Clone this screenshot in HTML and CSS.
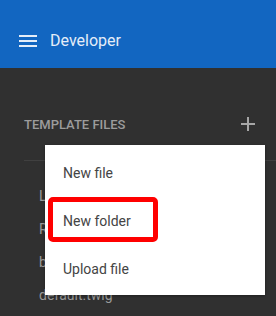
FILE: index.html
```html
<!DOCTYPE html>
<html lang="en">
<head>
<meta charset="utf-8">
<title>Developer</title>
<link rel="stylesheet" href="styles.css">
</head>
<body>
<header class="appbar">
  <svg class="menu-icon" width="24" height="24" viewBox="0 0 24 24" aria-hidden="true">
    <rect x="3" y="6" width="18" height="2" fill="currentColor"/>
    <rect x="3" y="11" width="18" height="2" fill="currentColor"/>
    <rect x="3" y="16" width="18" height="2" fill="currentColor"/>
  </svg>
  <span class="title">Developer</span>
</header>
<main class="content">
  <div class="section-head">
    <span class="section-title">TEMPLATE FILES</span>
    <svg class="add-icon" width="24" height="24" viewBox="0 0 24 24" aria-hidden="true">
      <path d="M12 5v14M5 12h14" stroke="currentColor" stroke-width="2" fill="none"/>
    </svg>
  </div>
  <div class="divider"></div>
  <ul class="files">
    <li>Layout.twig</li>
    <li>README.md</li>
    <li>base.twig</li>
    <li>default.twig</li>
  </ul>
  <div class="popup">
    <div class="popup-item">New file</div>
    <div class="popup-item">New folder</div>
    <div class="popup-item">Upload file</div>
    <div class="highlight"></div>
  </div>
</main>
</body>
</html>
```
FILE: styles.css
```css
html, body {
  margin: 0;
  padding: 0;
}
body {
  width: 276px;
  height: 316px;
  overflow: hidden;
  background: #303030;
  font-family: Roboto, "Liberation Sans", sans-serif;
}
.appbar {
  box-sizing: border-box;
  height: 68px;
  padding: 14px 0 0 16px;
  display: flex;
  align-items: center;
  gap: 10px;
  background: #1266c1;
  color: #e4edf8;
}
.menu-icon {
  display: block;
  flex: none;
}
.title {
  font-size: 16px;
  font-weight: 400;
  line-height: 24px;
}
.content {
  position: relative;
  padding-top: 32px;
}
.section-head {
  height: 48px;
  display: flex;
  align-items: center;
  justify-content: space-between;
  padding: 0 16px 0 24px;
}
.section-title {
  font-size: 13px;
  font-weight: 500;
  color: #9c9c9c;
}
.add-icon {
  display: block;
  color: #a6a6a6;
}
.divider {
  height: 1px;
  margin: 12px 0 0 24px;
  background: #404040;
}
.files {
  list-style: none;
  margin: 0;
  padding: 19px 0 0 39px;
}
.files li {
  height: 33px;
  line-height: 33px;
  font-size: 14px;
  color: #9a9a9a;
}
.popup {
  position: absolute;
  left: 45px;
  top: 77px;
  width: 220px;
  box-sizing: border-box;
  padding: 4px 0 2px;
  background: #ffffff;
  box-shadow: 0 1px 3px rgba(0, 0, 0, 0.35);
}
.popup-item {
  height: 48px;
  line-height: 48px;
  padding-left: 18px;
  font-size: 14px;
  color: #444444;
}
.highlight {
  position: absolute;
  left: 3px;
  top: 52px;
  width: 110px;
  height: 45px;
  box-sizing: border-box;
  border: 5px solid #ff0000;
  border-radius: 5px;
}
```
